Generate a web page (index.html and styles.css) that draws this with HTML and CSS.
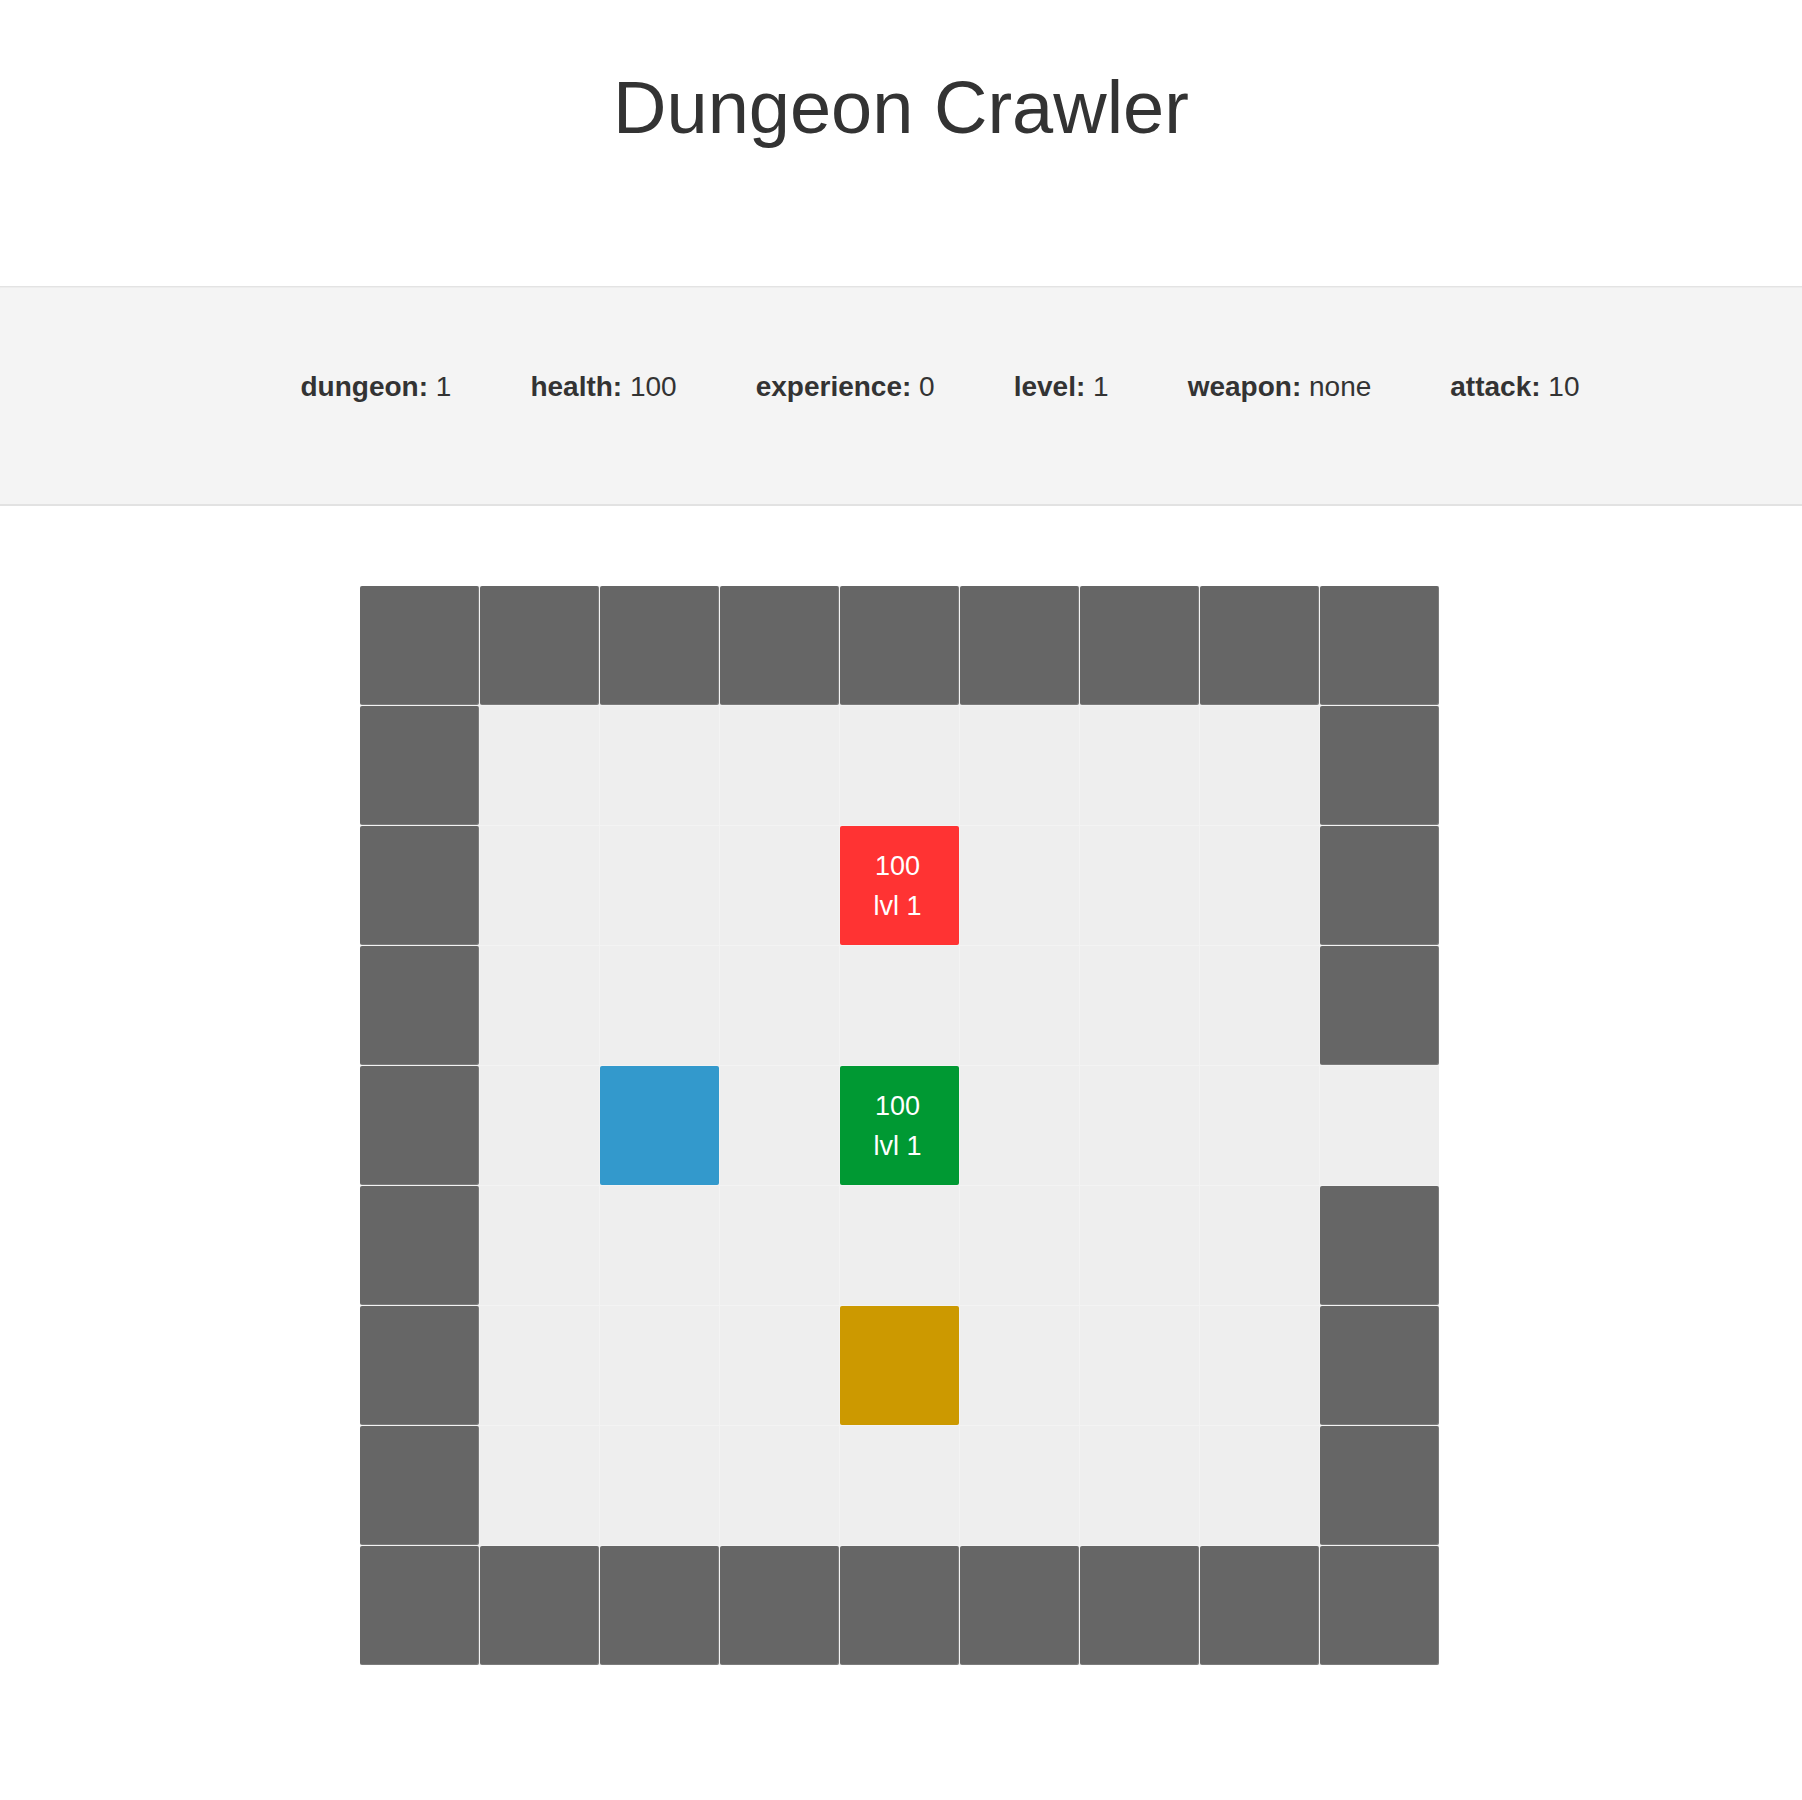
FILE: index.html
```html
<!DOCTYPE html>
<html>
<head>
<meta charset="utf-8">
<title>Dungeon Crawler</title>
<link rel="stylesheet" href="styles.css">
</head>
<body>
<header class="header">
  <h1 class="title">Dungeon Crawler</h1>
</header>
<section class="stats">
  <ul class="stats-list">
    <li class="stat"><b>dungeon:</b> 1</li>
    <li class="stat"><b>health:</b> 100</li>
    <li class="stat"><b>experience:</b> 0</li>
    <li class="stat"><b>level:</b> 1</li>
    <li class="stat"><b>weapon:</b> none</li>
    <li class="stat"><b>attack:</b> 10</li>
  </ul>
</section>
<main class="board-wrap">
  <div class="board">
    <div class="cell wall"></div><div class="cell wall"></div><div class="cell wall"></div><div class="cell wall"></div><div class="cell wall"></div><div class="cell wall"></div><div class="cell wall"></div><div class="cell wall"></div><div class="cell wall"></div>

    <div class="cell wall"></div><div class="cell floor"></div><div class="cell floor"></div><div class="cell floor"></div><div class="cell floor"></div><div class="cell floor"></div><div class="cell floor"></div><div class="cell floor"></div><div class="cell wall"></div>

    <div class="cell wall"></div><div class="cell floor"></div><div class="cell floor"></div><div class="cell floor"></div><div class="cell enemy"><span>100</span><span>lvl 1</span></div><div class="cell floor"></div><div class="cell floor"></div><div class="cell floor"></div><div class="cell wall"></div>

    <div class="cell wall"></div><div class="cell floor"></div><div class="cell floor"></div><div class="cell floor"></div><div class="cell floor"></div><div class="cell floor"></div><div class="cell floor"></div><div class="cell floor"></div><div class="cell wall"></div>

    <div class="cell wall"></div><div class="cell floor"></div><div class="cell health"></div><div class="cell floor"></div><div class="cell player"><span>100</span><span>lvl 1</span></div><div class="cell floor"></div><div class="cell floor"></div><div class="cell floor"></div><div class="cell floor"></div>

    <div class="cell wall"></div><div class="cell floor"></div><div class="cell floor"></div><div class="cell floor"></div><div class="cell floor"></div><div class="cell floor"></div><div class="cell floor"></div><div class="cell floor"></div><div class="cell wall"></div>

    <div class="cell wall"></div><div class="cell floor"></div><div class="cell floor"></div><div class="cell floor"></div><div class="cell weapon"></div><div class="cell floor"></div><div class="cell floor"></div><div class="cell floor"></div><div class="cell wall"></div>

    <div class="cell wall"></div><div class="cell floor"></div><div class="cell floor"></div><div class="cell floor"></div><div class="cell floor"></div><div class="cell floor"></div><div class="cell floor"></div><div class="cell floor"></div><div class="cell wall"></div>

    <div class="cell wall"></div><div class="cell wall"></div><div class="cell wall"></div><div class="cell wall"></div><div class="cell wall"></div><div class="cell wall"></div><div class="cell wall"></div><div class="cell wall"></div><div class="cell wall"></div>
  </div>
</main>
</body>
</html>
```
FILE: styles.css
```css
html, body {
  margin: 0;
  padding: 0;
  background: #fff;
}
body {
  font-family: "Liberation Sans", Arial, sans-serif;
  color: #333;
}
.header {
  height: 286px;
  box-sizing: border-box;
  padding-top: 67px;
  text-align: center;
}
.title {
  margin: 0;
  font-size: 74px;
  line-height: 1.1;
  font-weight: normal;
  color: #333;
}
.stats {
  height: 220px;
  box-sizing: border-box;
  background: #f4f4f4;
  border-top: 1px solid #e3e3e3;
  border-bottom: 2px solid #e2e2e2;
  box-shadow: inset 0 1px 1px rgba(0,0,0,0.03);
  padding-top: 84px;
}
.stats-list {
  list-style: none;
  margin: 0;
  padding: 0 0 0 78px;
  display: flex;
  justify-content: center;
  gap: 79px;
  font-size: 28px;
  line-height: 32px;
  color: #333;
}
.stat b {
  font-weight: bold;
}
.board-wrap {
  padding-top: 80px;
  padding-right: 3px;
  display: flex;
  justify-content: center;
}
.board {
  display: grid;
  grid-template-columns: repeat(9, 119px);
  grid-auto-rows: 119px;
  gap: 1px;
  background: #f3f3f3;
}
.cell {
  border-radius: 2px;
  box-sizing: border-box;
  display: flex;
  flex-direction: column;
  align-items: center;
  justify-content: center;
  color: #fff;
  font-size: 27px;
  line-height: 40px;
  padding-right: 4px;
}
.wall {
  background: #666;
  box-shadow: inset -1px -1px 0 rgba(255,255,255,0.15);
}
.floor {
  background: #eee;
  border-radius: 0;
}
.enemy {
  background: #f33;
}
.player {
  background: #093;
}
.health {
  background: #39c;
}
.weapon {
  background: #c90;
}
```
